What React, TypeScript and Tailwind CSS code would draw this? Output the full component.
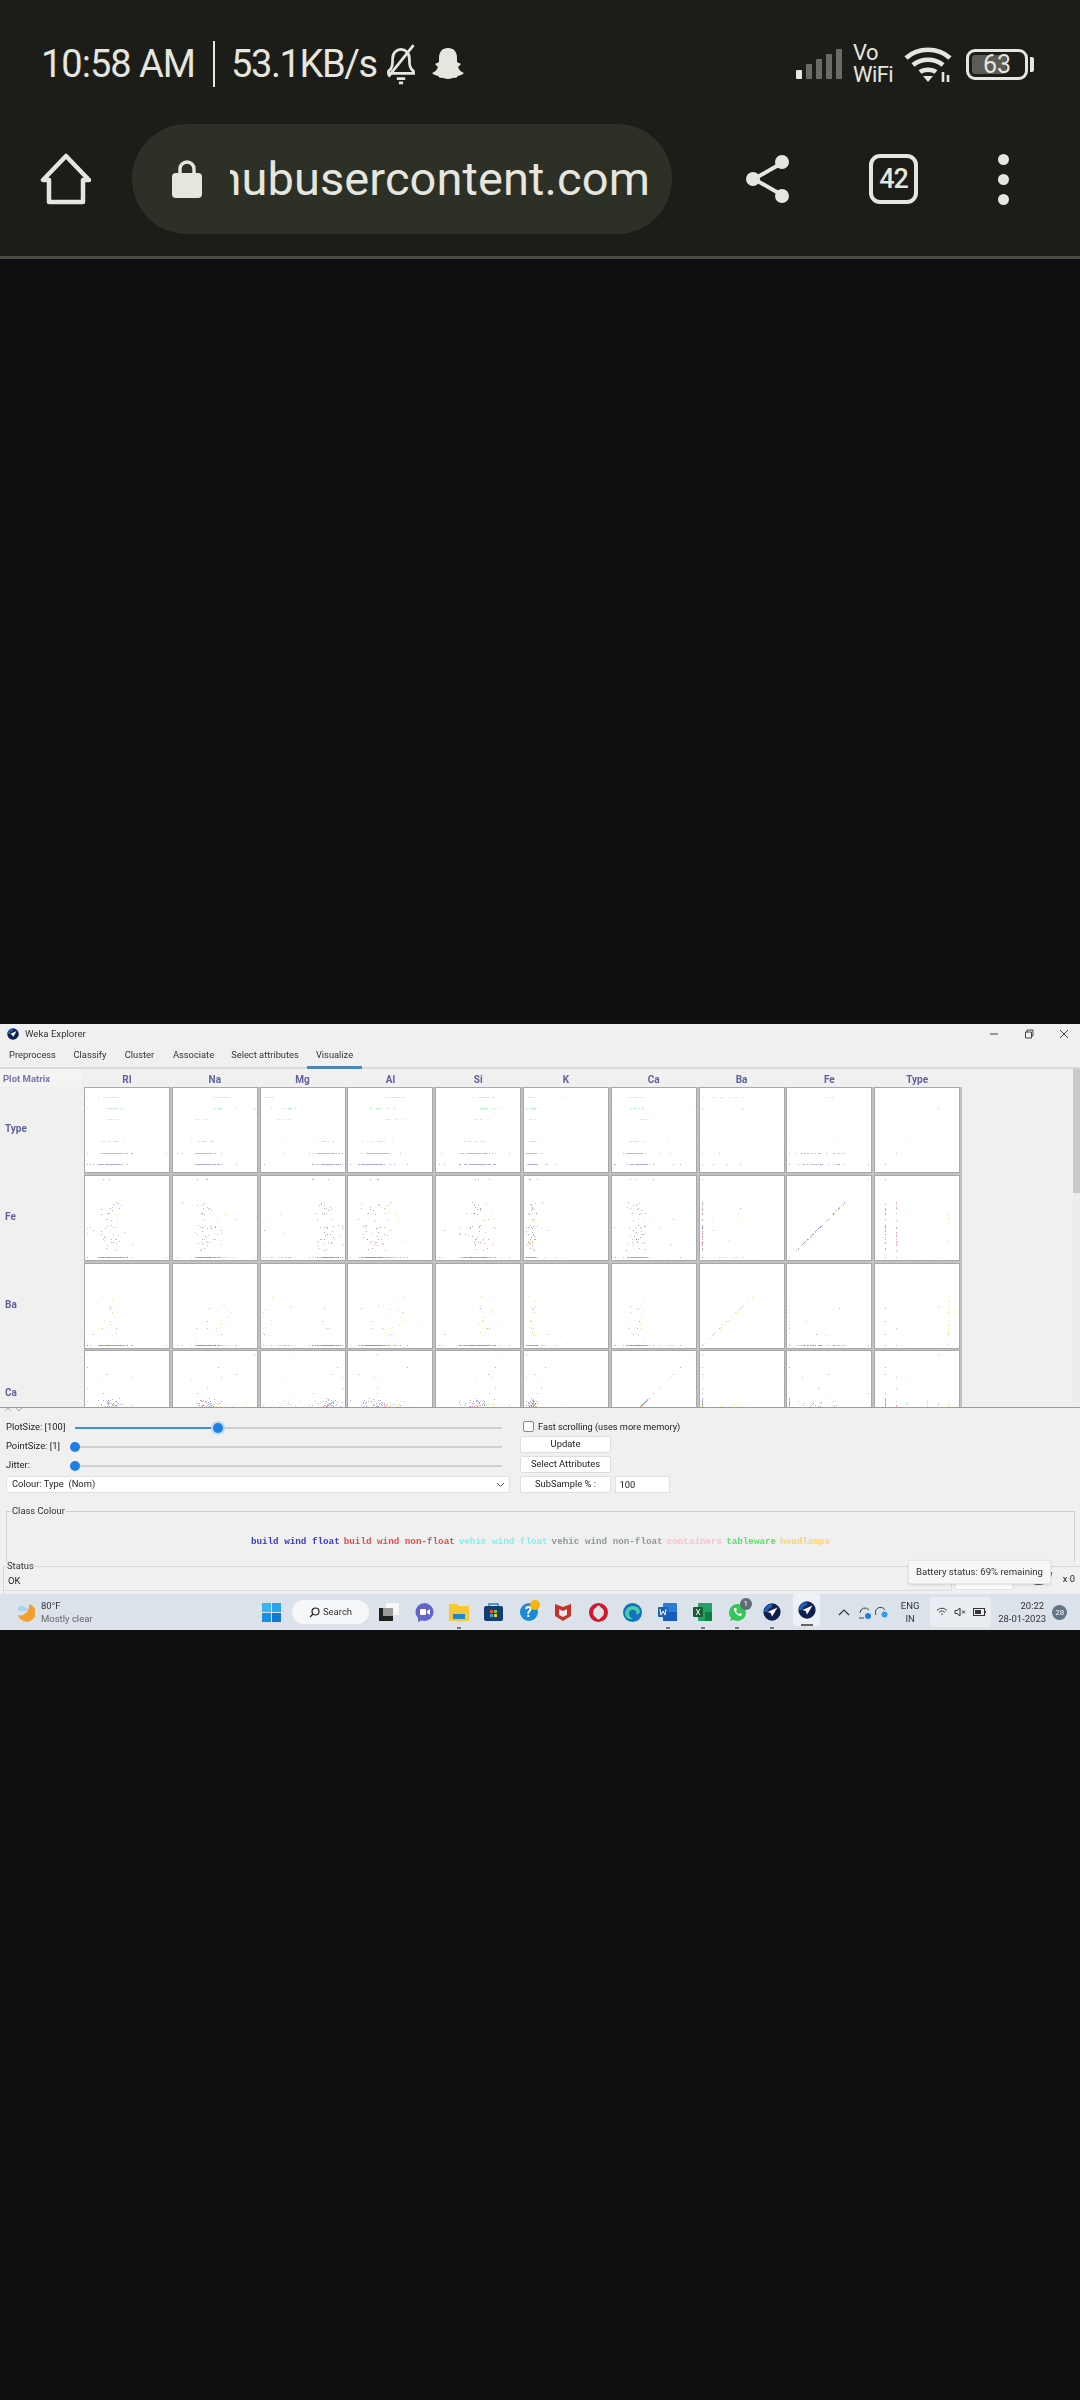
import React from "react";

/* ---------- seeded data for the scatter matrix ---------- */
function rng(seed: number) {
  return () => {
    seed |= 0; seed = (seed + 0x6d2b79f5) | 0;
    let t = Math.imul(seed ^ (seed >>> 15), 1 | seed);
    t = (t + Math.imul(t ^ (t >>> 7), 61 | t)) ^ t;
    return ((t ^ (t >>> 14)) >>> 0) / 4294967296;
  };
}
const r = rng(1234);
const g = (m: number, s: number) => {
  const v = m + s * Math.sqrt(-2 * Math.log(r() + 1e-6)) * Math.cos(6.283 * r());
  return Math.max(0, Math.min(1, v));
};
const CLASSES = [
  { color: "#2222cc", n: 70, pos: 0.1, y: 0.9, ri: 0.3, na: 0.4, mg: 0.82, al: 0.27, si: 0.5, ca: 0.33, ba: 0, fe: 0.35 },
  { color: "#dd2222", n: 76, pos: 0.235, y: 0.77, ri: 0.33, na: 0.37, mg: 0.78, al: 0.36, si: 0.48, ca: 0.26, ba: 0, fe: 0.4 },
  { color: "#22dddd", n: 17, pos: 0.37, y: 0.634, ri: 0.3, na: 0.42, mg: 0.82, al: 0.3, si: 0.47, ca: 0.28, ba: 0, fe: 0.2 },
  { color: "#ffa0b0", n: 13, pos: 0.63, y: 0.37, ri: 0.33, na: 0.33, mg: 0.3, al: 0.55, si: 0.55, ca: 0.38, ba: 0, fe: 0.1 },
  { color: "#22dd44", n: 9, pos: 0.77, y: 0.237, ri: 0.3, na: 0.58, mg: 0.3, al: 0.4, si: 0.6, ca: 0.32, ba: 0, fe: 0 },
  { color: "#eebb11", n: 29, pos: 0.9, y: 0.105, ri: 0.3, na: 0.6, mg: 0.06, al: 0.6, si: 0.55, ca: 0.3, ba: 0.3, fe: 0.1 },
];
type S = { c: number; v: Record<string, number> };
const samples: S[] = [];
CLASSES.forEach((k, c) => {
  for (let i = 0; i < k.n; i++) {
    const out = r() < 0.08;
    samples.push({
      c,
      v: {
        RI: g(k.ri, out ? 0.3 : 0.08),
        Na: g(k.na, out ? 0.25 : 0.07),
        Mg: g(k.mg, out ? 0.35 : 0.07),
        Al: g(k.al, out ? 0.25 : 0.09),
        Si: g(k.si, out ? 0.25 : 0.1),
        K: g(0.07, out ? 0.2 : 0.03),
        Ca: g(k.ca, out ? 0.3 : 0.05),
        Ba: r() < (c === 5 ? 0.7 : 0.05) ? g(0.3, 0.17) : 0,
        Fe: r() < k.fe ? 0.08 + r() * 0.62 : r() < 0.01 ? 1 : 0,
        Type: k.pos,
      },
    });
  }
});
const COLS = ["RI", "Na", "Mg", "Al", "Si", "K", "Ca", "Ba", "Fe", "Type"];
const ROWS = ["Type", "Fe", "Ba", "Ca"];
const S_ = 84;
function Plot({ col, row }: { col: string; row: string }) {
  const paths = CLASSES.map(() => "");
  samples.forEach((s) => {
    const x = Math.round(2 + (S_ - 5) * (col === "Type" ? s.v.Type : s.v[col]));
    const y = row === "Type"
      ? Math.round(S_ * CLASSES[s.c].y)
      : Math.round(S_ - 3 - (S_ - 6) * s.v[row]);
    paths[s.c] += `M${x} ${y}h1v1h-1z`;
  });
  return (
    <div className="w-[86px] h-[86px] bg-white border border-[#a8a8a8]">
      <svg viewBox="0 0 84 84" width="84" height="84" className="block">
        {paths.map((d, i) => (
          <path key={i} d={d} fill={CLASSES[i].color} opacity={0.38} shapeRendering="crispEdges" />
        ))}
      </svg>
    </div>
  );
}

/* ---------- icons ---------- */
const W = "#e6e6df";
const Weka = ({ s = 18 }: { s?: number }) => (
  <svg width={s} height={s} viewBox="0 0 20 20">
    <circle cx="10" cy="10" r="9.6" fill="#10204e" />
    <path d="M1 10a9 9 0 0 1 9-9v4a5 5 0 0 0-5 5z" fill="#1f6fd8" opacity=".8" />
    <path d="M16 5 5 10l3.5 1.2L10 15l2-3z" fill="#fff" />
  </svg>
);
const Slider = ({ label, pct }: { label: string; pct: number }) => (
  <div className="h-[19px] flex items-center">
    <span className="w-[74px] shrink-0 pl-[5px] text-[9.4px] text-[#222] whitespace-nowrap">{label}</span>
    <div className="relative w-[427px] h-[2px] bg-[#cfcfcf]">
      <div className="h-full bg-[#3f8fe0]" style={{ width: `${pct}%` }} />
      <div
        className={`absolute top-1/2 -translate-x-1/2 -translate-y-1/2 w-[10px] h-[10px] rounded-full bg-[#1f7fe0] ${pct > 0 ? "ring-[2px] ring-[#bcd9f5]" : ""}`}
        style={{ left: `${pct}%` }}
      />
    </div>
  </div>
);
const Btn = ({ children, h }: { children: React.ReactNode; h: string }) => (
  <div className={`w-[91px] ${h} bg-white border border-[#dedede] rounded-[2px] flex items-center justify-center text-[9.4px] text-[#222] whitespace-nowrap`}>
    {children}
  </div>
);
const Slot = ({ children, mark = false }: { children: React.ReactNode; mark?: boolean }) => (
  <div className="relative w-[34.8px] h-[36px] flex items-center justify-center shrink-0">
    {children}
    {mark && <span className="absolute bottom-[1px] left-1/2 -translate-x-1/2 w-[4px] h-[2px] bg-[#777]" />}
  </div>
);

const classNames: [string, string][] = [
  ["build wind float", "text-[#3a3ad0]"],
  ["build wind non-float", "text-[#e84a4a]"],
  ["vehic wind float", "text-[#7ff0f0]"],
  ["vehic wind non-float", "text-[#8a9a9a]"],
  ["containers", "text-[#ffc0c8]"],
  ["tableware", "text-[#4fe862]"],
  ["headlamps", "text-[#ffd566]"],
];

export default function App() {
  return (
    <div className="w-[1080px] h-[2400px] bg-[#0e0f10] flex flex-col font-['Roboto',sans-serif]">
      {/* phone chrome */}
      <header className="h-[259px] shrink-0 bg-[#1c1d18] border-b-[3px] border-[#4b4c45] text-[#e6e6df]">
        <div className="h-[124px] pl-[41px] pr-[46px] flex items-start pt-[40px]">
          <div className="flex items-center h-[48px]">
            <span className="text-[38px] leading-none tracking-[-1px] w-[158px] whitespace-nowrap">10:58 AM</span>
            <span className="w-[2px] h-[46px] bg-[#e6e6df] ml-[14px]" />
            <span className="text-[38px] leading-none tracking-[-1.4px] ml-[16px] w-[148px] whitespace-nowrap">53.1KB/s</span>
            <svg width="36" height="44" viewBox="0 0 34 42" className="ml-[4px]" fill="none" stroke={W} strokeWidth="2.6">
              <path d="M5 28c4-3 4-7 4-12 0-6 4-9 8-9s8 3 8 9c0 5 0 9 4 12v2H5z" />
              <path d="M13 35h8M15 39h4" />
              <path d="M29 3 5 33" />
            </svg>
            <svg width="36" height="36" viewBox="0 0 36 36" className="ml-[11px]" fill={W}>
              <path d="M18 2c6 0 9 4 9 10v4l4 2-3 3c1 3 3 5 6 6-2 2-4 2-6 3l-2 2c-3-1-5 1-8 1s-5-2-8-1l-2-2c-2-1-4-1-6-3 3-1 5-3 6-6l-3-3 4-2v-4C9 6 12 2 18 2z" />
            </svg>
          </div>
          <div className="ml-auto flex items-center h-[48px]">
            <svg width="48" height="32" viewBox="0 0 48 32">
              <rect x="0" y="22" width="6" height="9" rx="1" fill={W} />
              <rect x="10" y="16" width="6" height="15" rx="1" fill="#6a6b65" />
              <rect x="20" y="11" width="6" height="20" rx="1" fill="#6a6b65" />
              <rect x="30" y="6" width="6" height="25" rx="1" fill="#6a6b65" />
              <rect x="40" y="1" width="6" height="30" rx="1" fill="#6a6b65" />
            </svg>
            <div className="ml-[9px] w-[44px] text-[22px] leading-[22px] tracking-[-0.6px] whitespace-nowrap">
              <div>Vo</div>
              <div>WiFi</div>
            </div>
            <svg width="48" height="40" viewBox="0 0 48 40" className="ml-[7px]" fill="none" stroke={W} strokeWidth="4.6">
              <path d="M2 14c12-11 32-11 44 0M9 21c8-7 22-7 30 0M16 28c4-3 12-3 16 0" />
              <path d="M24 38 19 32h10z" fill={W} stroke="none" />
              <path d="M39 28v10M44 31v7" strokeWidth="2.6" />
            </svg>
            <div className="ml-[14px] w-[62px] h-[31px] border-[3px] border-[#e6e6df] rounded-[9px] p-[3px] relative">
              <div className="h-full w-[34px] bg-[#5b5c56] rounded-[3px]" />
              <span className="absolute inset-0 flex items-center justify-center text-[25px] leading-none">63</span>
            </div>
            <div className="ml-[2px] w-[4px] h-[15px] bg-[#e6e6df] rounded-r-[2px]" />
          </div>
        </div>
        <div className="h-[110px] flex items-center">
          <svg width="52" height="52" viewBox="0 0 52 52" className="ml-[40px]" fill="none" stroke={W} strokeWidth="4.5" strokeLinejoin="round">
            <path d="M26 3 3 27h6v22h34V27h6z" />
          </svg>
          <div className="ml-[40px] w-[540px] h-[110px] rounded-[55px] bg-[#2c3026] flex items-center">
            <svg width="30" height="40" viewBox="0 0 30 40" className="ml-[40px] shrink-0">
              <path d="M8 16V10a7 7 0 0 1 14 0v6" fill="none" stroke={W} strokeWidth="3.4" />
              <rect x="0" y="14" width="30" height="25" rx="4" fill={W} />
            </svg>
            <div className="ml-[28px] w-[420px] flex justify-end overflow-hidden">
              <span className="text-[47px] leading-[56px] tracking-[0.1px] whitespace-nowrap text-[#e6e6df]">hubusercontent.com</span>
            </div>
          </div>
          <svg width="44" height="48" viewBox="0 0 44 48" className="ml-[74px]" fill={W} stroke={W} strokeWidth="4">
            <path d="M36 8 8 24l28 16" fill="none" />
            <circle cx="36" cy="7" r="5" />
            <circle cx="7" cy="24" r="5" />
            <circle cx="36" cy="41" r="5" />
          </svg>
          <div className="ml-[79px] w-[49px] h-[50px] border-[4.5px] border-[#e6e6df] rounded-[11px] flex items-center justify-center text-[27px] font-medium tracking-[-1px] text-[#e6e6df]">42</div>
          <div className="ml-[80px] flex flex-col gap-[9px]">
            <span className="w-[11px] h-[11px] rounded-full bg-[#e6e6df]" />
            <span className="w-[11px] h-[11px] rounded-full bg-[#e6e6df]" />
            <span className="w-[11px] h-[11px] rounded-full bg-[#e6e6df]" />
          </div>
        </div>
      </header>

      <div className="h-[765px] shrink-0" />

      {/* Weka window */}
      <main className="h-[606px] shrink-0 bg-[#f0f0f0] flex flex-col overflow-hidden blur-[0.35px] text-[#222]">
        <div className="h-[20px] shrink-0 flex items-center pl-[7px]">
          <Weka s={12} />
          <span className="ml-[6px] text-[9.6px] text-[#333]">Weka Explorer</span>
          <div className="ml-auto flex items-center">
            <svg width="10" height="10" viewBox="0 0 10 10" stroke="#444"><path d="M1 5h8" /></svg>
            <svg width="10" height="10" viewBox="0 0 10 10" fill="none" stroke="#444" className="ml-[25px]"><path d="M1.5 3h6v6h-6zM3 3V1h6v6H7.500" /></svg>
            <svg width="10" height="10" viewBox="0 0 10 10" stroke="#444" className="ml-[25px] mr-[11px]"><path d="m1 1 8 8M9 1 1 9" /></svg>
          </div>
        </div>
        <nav className="h-[25px] shrink-0 flex border-b-[2px] border-[#d9d9d9] text-[9.3px] text-[#333]">
          {[["Preprocess", "w-[65px]"], ["Classify", "w-[50px]"], ["Cluster", "w-[49px]"], ["Associate", "w-[59px]"], ["Select attributes", "w-[84px]"]].map(([t, w]) => (
            <span key={t} className={`${w} text-center leading-[22px] whitespace-nowrap`}>{t}</span>
          ))}
          <span className="w-[55px] text-center leading-[22px] h-[25px] border-b-[3px] border-[#4d86bb]">Visualize</span>
        </nav>

        {/* matrix */}
        <section className="h-[339px] shrink-0 flex overflow-hidden border-b border-[#9c9c9c]">
          <div className="w-[84px] shrink-0 flex flex-col text-[#5d629c] font-bold text-[10px]">
            <div className="h-[18px] pl-[3px] leading-[20px] text-[#7378ad] text-[9.500px] bg-[#f4f4f4] mr-[3px]">Plot Matrix</div>
            {ROWS.map((n) => (
              <div key={n} className="h-[87.800px] shrink-0 flex items-center pl-[5px] pb-[4px]">{n}</div>
            ))}
          </div>
          <div className="w-[878px] shrink-0">
            <div className="h-[18px] grid grid-cols-[repeat(10,86px)] gap-x-[1.8px] text-[#5d629c] font-bold text-[10px] text-center leading-[21px]">
              {COLS.map((c) => <span key={c}>{c}</span>)}
            </div>
            <div className="grid grid-cols-[repeat(10,86px)] gap-[1.8px] bg-[#c2c2c2]">
              {ROWS.map((row) => COLS.map((col) => <Plot key={row + col} row={row} col={col} />))}
            </div>
          </div>
          <div className="ml-auto w-[7px] bg-[#ededed]">
            <div className="h-[124px] bg-[#c9c9c9]" />
          </div>
        </section>

        {/* controls */}
        <section className="relative flex-1 flex flex-col">
          <div className="absolute left-[4px] top-[-1px] flex gap-[3px]">
            <svg width="8" height="5" viewBox="0 0 8 5" fill="none" stroke="#aaa"><path d="m1 4 3-3 3 3" /></svg>
            <svg width="8" height="5" viewBox="0 0 8 5" fill="none" stroke="#aaa"><path d="m1 1 3 3 3-3" /></svg>
          </div>
          <div className="flex pt-[10px] h-[86px] shrink-0">
            <div className="w-[515px] shrink-0 pl-[1px]">
              <Slider label="PlotSize: [100]" pct={33.5} />
              <Slider label="PointSize: [1]" pct={0} />
              <Slider label="Jitter:" pct={0} />
              <div className="ml-[5px] mt-[1px] w-[504px] h-[17px] bg-white border border-[#e2e2e2] rounded-[2px] flex items-center pl-[5px] pr-[4px] text-[9.4px]">
                <span className="whitespace-pre">Colour: Type  (Nom)</span>
                <svg width="9" height="6" viewBox="0 0 9 6" fill="none" stroke="#555" className="ml-auto"><path d="m1 1 3.500 3.500L8 1" /></svg>
              </div>
            </div>
            <div className="ml-[5px] flex flex-col">
              <div className="h-[17px] flex items-center ml-[3px] text-[9.2px] whitespace-nowrap">
                <span className="w-[11px] h-[11px] bg-white border border-[#8a8a8a] rounded-[2px] mr-[4px]" />
                Fast scrolling (uses more memory)
              </div>
              <div className="mt-[1px]"><Btn h="h-[17px]">Update</Btn></div>
              <div className="mt-[3px]"><Btn h="h-[17px]">Select Attributes</Btn></div>
              <div className="mt-[3px] flex gap-[3.500px]">
                <Btn h="h-[17px]">SubSample % :</Btn>
                <div className="w-[55px] h-[17px] bg-white border border-[#e2e2e2] pl-[4px] text-[9.4px] leading-[15px]">100</div>
              </div>
            </div>
          </div>
          <fieldset className="ml-[6px] mr-[5px] mt-[10px] h-[58px] shrink-0 border-t border-l border-r border-[#d0d0d0]">
            <legend className="ml-[4px] px-[1px] text-[9.4px] leading-[14px] text-[#333]">Class Colour</legend>
            <div className="pt-[19px] w-full flex justify-center gap-[4px] font-['Liberation_Mono',monospace] font-bold text-[9.25px] leading-none whitespace-nowrap">
              {classNames.map(([t, c]) => <span key={t} className={c}>{t}</span>)}
            </div>
          </fieldset>
          <fieldset className="ml-[3px] mt-[-2px] border-t border-l border-[#d8d8d8] flex-1">
            <legend className="ml-[3px] text-[9.4px] leading-[12px] text-[#333]">Status</legend>
            <div className="flex h-[19px]">
              <div className="w-[948px] h-[19px] border-b border-r border-[#dcdcdc] pl-[4px] text-[9.4px] leading-[17px]">OK</div>
              <div className="flex-1 flex items-start justify-end pr-[5px]">
                <div className="w-[27px] h-[13px] rounded-b-full bg-[#555]" />
                <span className="ml-[11px] text-[9.4px] leading-[14px]">x 0</span>
              </div>
            </div>
          </fieldset>
          <div className="absolute left-[955px] top-[174px] w-[58px] h-[8px] bg-white border border-[#e2e2e2]" />
          <div className="absolute left-[908px] top-[152px] w-[143px] h-[24px] bg-[#f7f7f7] border border-[#e6e6e6] rounded-[3px] shadow-sm flex items-center justify-center text-[9.6px] text-[#333] whitespace-nowrap">
            Battery status: 69% remaining
          </div>
        </section>

        {/* taskbar */}
        <footer className="h-[36px] shrink-0 bg-[#dce2ea] flex items-center text-[#333]">
          <div className="w-[262px] shrink-0 flex items-center pl-[17px]">
            <svg width="18" height="20" viewBox="0 0 18 20">
              <path d="M12 2a9 9 0 1 1-11 11c5 2 12-3 11-11z" fill="#f0a030" />
              <path d="M1 7c0-2 2-3 4-3s3 1 4 2c2 0 2 3 0 3H3C1 9 1 8 1 7z" fill="#a9d0ee" />
            </svg>
            <div className="ml-[6px] text-[9.500px] leading-[13px] whitespace-nowrap">
              <div>80°F</div>
              <div className="text-[#666]">Mostly clear</div>
            </div>
          </div>
          <svg width="19" height="19" viewBox="0 0 19 19" className="shrink-0">
            <rect x="0" y="0" width="9" height="9" fill="#3bb4f2" />
            <rect x="10" y="0" width="9" height="9" fill="#2aa5ea" />
            <rect x="0" y="10" width="9" height="9" fill="#1a8ee0" />
            <rect x="10" y="10" width="9" height="9" fill="#0f7ad2" />
          </svg>
          <div className="ml-[11px] w-[77px] h-[24px] shrink-0 rounded-full bg-[#f6f7f8] flex items-center justify-center text-[9.500px] text-[#333]">
            <svg width="11" height="11" viewBox="0 0 11 11" fill="none" stroke="#222" strokeWidth="1.2" className="mr-[3px]"><circle cx="6.500" cy="4.500" r="3.500" /><path d="M4 7 1 10" /></svg>
            Search
          </div>
          <div className="flex ml-[3px]">
            <Slot>
              <svg width="20" height="18" viewBox="0 0 20 18"><rect x="7" y="0" width="13" height="12" fill="#f7f7f7" /><rect x="0" y="5" width="14" height="13" fill="#1f1f1f" /><rect x="4" y="5" width="10" height="8" fill="#999" /></svg>
            </Slot>
            <Slot>
              <svg width="19" height="19" viewBox="0 0 19 19"><circle cx="9.500" cy="9" r="9" fill="#6264c8" /><path d="M3 14v5l4-2z" fill="#6264c8" /><rect x="5" y="6" width="6" height="6" rx="1" fill="#fff" /><path d="m12 8 3-2v6l-3-2z" fill="#fff" /></svg>
            </Slot>
            <Slot mark>
              <svg width="20" height="18" viewBox="0 0 20 18"><path d="M0 1h8l2 2h10v15H0z" fill="#f7c834" /><rect x="4" y="11" width="12" height="5" fill="#1f86d0" /></svg>
            </Slot>
            <Slot>
              <svg width="19" height="18" viewBox="0 0 19 18"><path d="M5 4V1h9v3" fill="none" stroke="#2a82c8" strokeWidth="1.500" /><rect y="3" width="19" height="15" rx="2" fill="#123f70" /><rect x="6" y="7" width="3" height="3" fill="#e8503a" /><rect x="10" y="7" width="3" height="3" fill="#7cc23a" /><rect x="6" y="11" width="3" height="3" fill="#2aa5ea" /><rect x="10" y="11" width="3" height="3" fill="#f7c834" /></svg>
            </Slot>
            <Slot>
              <div className="relative w-[18px] h-[18px] rounded-full bg-[#1b8ad2] text-white text-[14px] leading-[18px] text-center font-bold">
                ?
                <span className="absolute right-[-2px] top-[-3px] w-[10px] h-[10px] rounded-full bg-[#f5b50a]" />
              </div>
            </Slot>
            <Slot>
              <svg width="18" height="18" viewBox="0 0 18 18"><path d="M1 1 9 4l8-3v12l-8 5-8-5z" fill="#c8302a" /><path d="M5 6l4 2 4-2v6l-4 2-4-2z" fill="#e7e9ee" /></svg>
            </Slot>
            <Slot>
              <svg width="19" height="19" viewBox="0 0 19 19"><circle cx="9.500" cy="9.500" r="7.500" fill="none" stroke="#d3162a" strokeWidth="4" /><ellipse cx="9.500" cy="9.500" rx="3.500" ry="7" fill="#dce2ea" /></svg>
            </Slot>
            <Slot>
              <svg width="19" height="19" viewBox="0 0 19 19"><circle cx="9.500" cy="9.500" r="9.500" fill="#1173c2" /><path d="M3 7c2-4 9-6 13-1 2 3 0 6-3 5 2-3-2-5-5-4-3 1-3 7 2 9-4 1-8-2-8-6z" fill="#49d0a0" /></svg>
            </Slot>
            <Slot mark>
              <svg width="19" height="18" viewBox="0 0 19 18"><rect x="5" y="0" width="14" height="18" rx="1" fill="#2b7cd3" /><rect x="5" y="9" width="14" height="9" fill="#185abd" /><rect x="0" y="4" width="10" height="10" rx="1" fill="#1e5fb8" /><path d="m2 6 1 6 2-4 2 4 1-6" fill="none" stroke="#fff" /></svg>
            </Slot>
            <Slot mark>
              <svg width="19" height="18" viewBox="0 0 19 18"><rect x="5" y="0" width="14" height="18" rx="1" fill="#21a366" /><rect x="12" y="9" width="7" height="9" fill="#107c41" /><rect x="0" y="4" width="10" height="10" rx="1" fill="#185c37" /><path d="m3 6 4 6M7 6l-4 6" stroke="#fff" /></svg>
            </Slot>
            <Slot mark>
              <div className="relative">
                <svg width="19" height="19" viewBox="0 0 19 19"><circle cx="9.500" cy="9.500" r="8.500" fill="#34c659" /><path d="M2 18l2-5 3 3z" fill="#34c659" /><path d="M6 5c-1 3 3 8 7 8l1-2-2-1-1 1c-1 0-3-2-3-3l1-1-1-2z" fill="#fff" /></svg>
                <span className="absolute right-[-5px] top-[-5px] w-[12px] h-[12px] rounded-full bg-[#5f6b75] text-white text-[8px] leading-[12px] text-center">1</span>
              </div>
            </Slot>
            <Slot mark><Weka /></Slot>
            <div className="relative w-[27px] h-[32px] mx-[3.800px] shrink-0 bg-[#edf0f4] rounded-[3px] flex items-center justify-center">
              <Weka />
              <span className="absolute bottom-[0px] left-1/2 -translate-x-1/2 w-[12px] h-[2px] bg-[#666]" />
            </div>
          </div>
          <div className="ml-[14px] flex items-center">
            <svg width="12" height="8" viewBox="0 0 12 8" fill="none" stroke="#333" strokeWidth="1.200"><path d="m1 7 5-5 5 5" /></svg>
            <svg width="13" height="14" viewBox="0 0 13 14" fill="none" stroke="#444" className="ml-[8px]"><path d="M2 8a5 5 0 0 1 9-3M1 13h5" /><circle cx="10" cy="11" r="3" fill="#1f7fe0" stroke="none" /></svg>
            <svg width="13" height="12" viewBox="0 0 13 12" fill="none" stroke="#444" className="ml-[4px]"><path d="M1 9a5 5 0 0 1 9-5" /><circle cx="9.500" cy="8.500" r="3" fill="#3b9ae0" stroke="none" /></svg>
            <div className="ml-[12px] w-[20px] text-[9.500px] leading-[13px] text-center text-[#333]">ENG<br />IN</div>
            <div className="ml-[10px] w-[61px] h-[30px] bg-[#e9edf2] rounded-[3px] flex items-center justify-center gap-[6px]">
              <svg width="12" height="10" viewBox="0 0 12 10" fill="none" stroke="#333"><path d="M1 3.500c3-3 7-3 10 0M3 5.500c2-2 4-2 6 0M5 7.500c.7-.6 1.300-.6 2 0" /></svg>
              <svg width="13" height="10" viewBox="0 0 13 10" fill="none" stroke="#333"><path d="M1 3.500h2L6 1v8L3 6.500H1zM8 3.500l3 3M11 3.500l-3 3" /></svg>
              <svg width="13" height="8" viewBox="0 0 13 8"><rect x=".5" y=".5" width="11" height="7" fill="none" stroke="#333" /><rect x="2" y="2" width="6" height="4" fill="#333" /><rect x="12" y="3" width="1" height="2" fill="#333" /></svg>
            </div>
            <div className="ml-[7px] w-[46px] text-[9.500px] leading-[13px] text-right text-[#333] whitespace-nowrap">
              <div>20:22</div>
              <div>28-01-2023</div>
            </div>
            <div className="ml-[8px] w-[15px] h-[15px] rounded-full bg-[#5f7585] text-white text-[8px] leading-[15px] text-center">28</div>
          </div>
        </footer>
      </main>
    </div>
  );
}
